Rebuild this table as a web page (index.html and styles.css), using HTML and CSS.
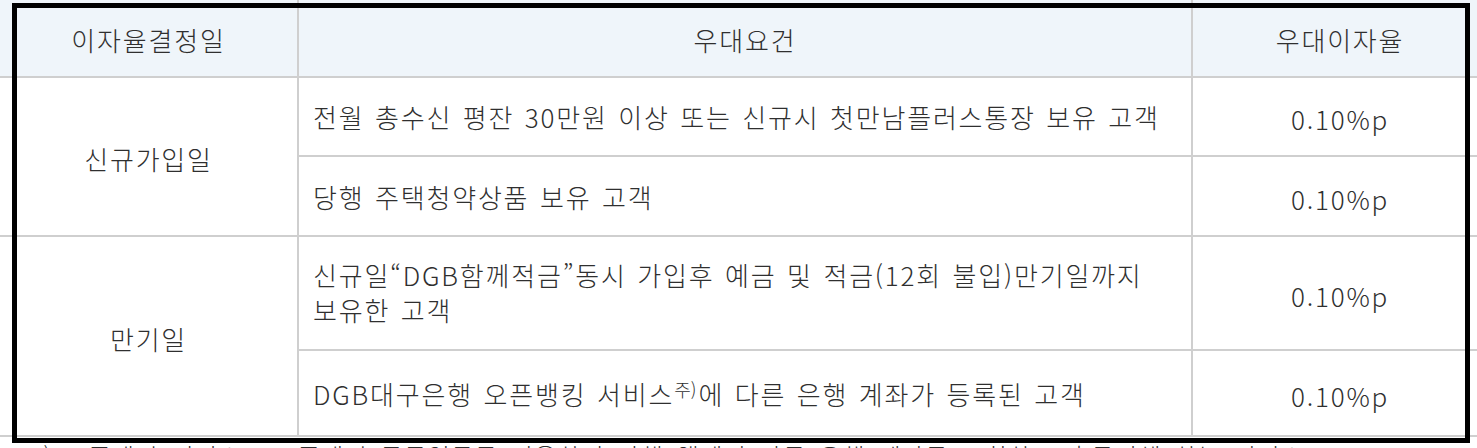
FILE: index.html
```html
<!DOCTYPE html>
<html lang="ko">
<head>
<meta charset="utf-8">
<title>우대이자율</title>
<link rel="stylesheet" href="styles.css">
</head>
<body>
<div class="page">
  <div class="rate-grid">
    <div class="cell head">이자율결정일</div>
    <div class="cell head">우대요건</div>
    <div class="cell head">우대이자율</div>

    <div class="cell date span2">신규가입일</div>
    <div class="cell cond">전월 총수신 평잔 30만원 이상 또는 신규시 첫만남플러스통장 보유 고객</div>
    <div class="cell rate">0.10%p</div>
    <div class="cell cond">당행 주택청약상품 보유 고객</div>
    <div class="cell rate">0.10%p</div>

    <div class="cell date span2">만기일</div>
    <div class="cell cond two">신규일“DGB함께적금”동시 가입후 예금 및 적금(12회 불입)만기일까지<br>보유한 고객</div>
    <div class="cell rate">0.10%p</div>
    <div class="cell cond">DGB대구은행 오픈뱅킹 서비스<sup class="note">주)</sup>에 다른 은행 계좌가 등록된 고객</div>
    <div class="cell rate">0.10%p</div>
  </div>
  <p class="footnote">주) 오픈뱅킹 서비스 : 오픈뱅킹 공동업무를 이용하여 당행 앱에서 다른 은행 계좌를 조회하고 출금이체 하는 서비스</p>
  <div class="highlight"></div>
</div>
</body>
</html>
```
FILE: styles.css
```css
html, body {
  margin: 0;
  padding: 0;
  overflow: hidden;
  background: #fff;
}

.page {
  position: relative;
  width: 1477px;
  height: 448px;
  overflow: hidden;
  font-family: "Noto Sans CJK KR", sans-serif;
  color: #2f2f2f;
}

.rate-grid {
  display: grid;
  width: 1487px;
  grid-template-columns: 297px 892px 294px;
  grid-template-rows: 76px 77px 78px 112px 84px;
  column-gap: 2px;
  row-gap: 2px;
  padding-bottom: 2px;
  background: #cfcfcf;
}

.cell {
  background: #fff;
  display: flex;
  align-items: center;
  justify-content: center;
  font-size: 26px;
  font-weight: 300;
  letter-spacing: 1.8px;
  word-spacing: 1.5px;
  line-height: 35px;
  white-space: nowrap;
}

.head {
  background: #eff5fa;
  padding-top: 3px;
}

.span2 {
  grid-row: span 2;
}

.date {
  padding-top: 4px;
}

.cond {
  justify-content: flex-start;
  padding: 0 14px;
  word-break: keep-all;
}

.two {
  display: block;
  align-self: stretch;
  padding-top: 20px;
}

.rate {
  padding-top: 4px;
}

.note {
  font-size: 18px;
  line-height: 1;
  letter-spacing: 0;
  position: relative;
  top: -4px;
  margin-right: 2px;
}

.footnote {
  margin: 4px 0 0 0;
  font-size: 24px;
  line-height: 30px;
  font-weight: 300;
  letter-spacing: 1.5px;
  word-spacing: 4px;
  padding-left: 20px;
  white-space: nowrap;
}

.highlight {
  position: absolute;
  left: 12px;
  top: 3px;
  width: 1458px;
  height: 440px;
  box-sizing: border-box;
  border: 5px solid #000;
  pointer-events: none;
}
```
